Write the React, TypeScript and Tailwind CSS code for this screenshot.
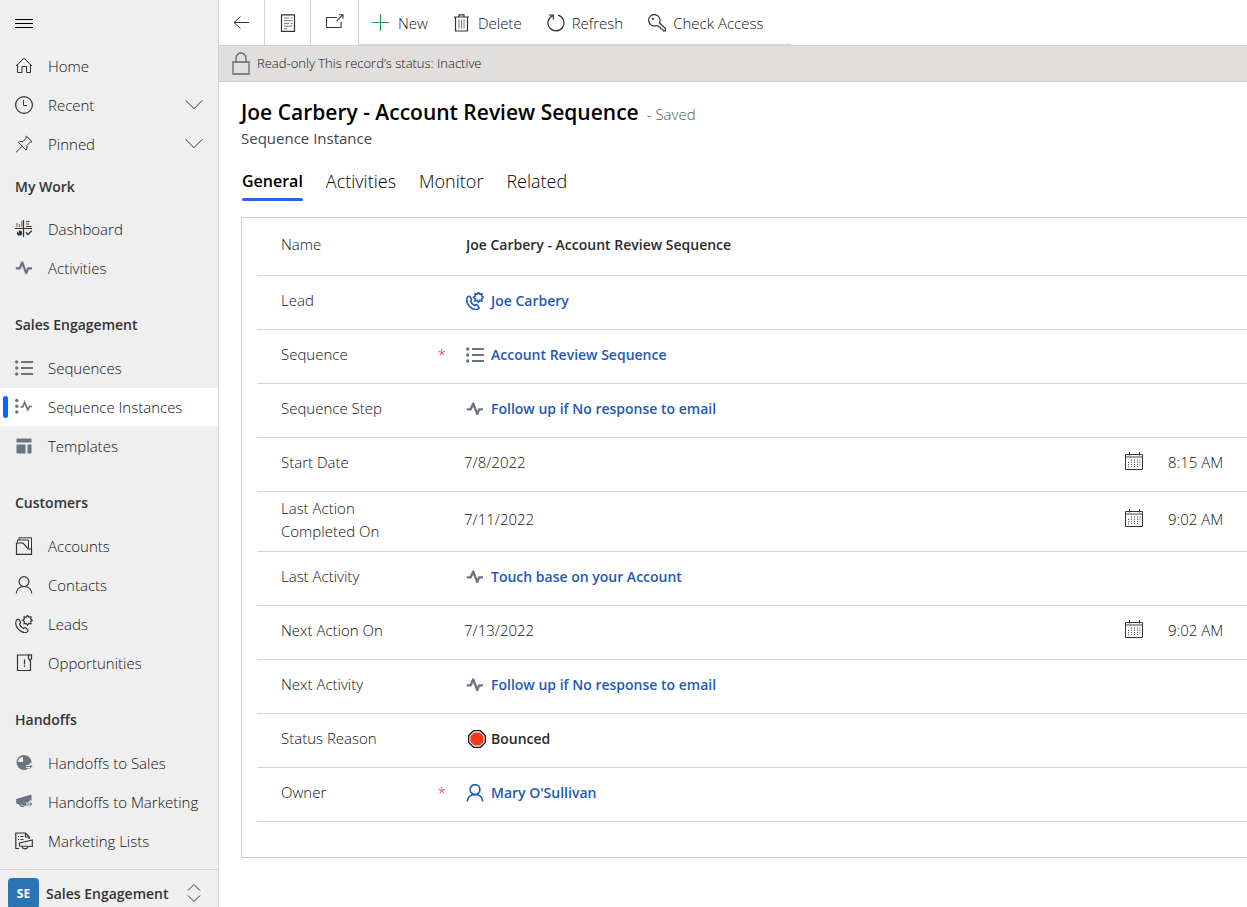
import type { ReactNode } from "react";
import clsx from "clsx";
import { twMerge } from "tailwind-merge";

type IconProps = { className?: string; children?: ReactNode };

function Icon({ className, children }: IconProps) {
  return (
    <svg
      viewBox="0 0 18 18"
      fill="none"
      stroke="currentColor"
      strokeWidth="1"
      aria-hidden="true"
      className={twMerge("size-[18px] shrink-0 text-[#333]", className)}
    >
      {children}
    </svg>
  );
}

const HomeIcon = () => (
  <Icon>
    <path d="M1 9 9 1.2 17 9M2.5 7.5v8h4.5v-6h4.5v6h4v-8" />
  </Icon>
);

const ClockIcon = () => (
  <Icon>
    <circle cx="9" cy="9" r="8.4" strokeWidth="1.2" />
    <path d="M8.5 4v5.5H12" />
  </Icon>
);

const PinIcon = () => (
  <Icon>
    <path d="M11.3 1 17 6.7l-1.9.5-3.3 3.3c.5 1.7.2 3.2-.7 4.5L3.5 7.4c1.3-1 2.8-1.2 4.5-.7L11 3.2zM7.2 11.2 1 17.3" />
  </Icon>
);

const DashboardIcon = () => (
  <Icon>
    <path d="M8.5 0v17M0 8.500h17" strokeWidth="1.2" />
    <path d="M2 7V3M4.500 7V4M6.800 7V1" stroke="#b0703a" strokeWidth="1.3" />
    <path d="M11 1.500h3.500M11 4h3M11 6.500h5.500" />
    <circle cx="4.500" cy="13" r="2.600" fill="currentColor" stroke="none" />
    <path d="M4 13.200V9.500H1z" fill="#efefef" stroke="none" />
    <path d="m10.800 12.300 2.200 2.200 3.800-3.700" strokeWidth="1.3" />
  </Icon>
);

const PulseIcon = () => (
  <Icon className="text-[#6b7480]">
    <path d="M.8 9.300h3.900L7.200 3.500l4 10.500 2-4.700H17" strokeWidth="2.300" strokeLinejoin="round" />
  </Icon>
);

const ListIcon = () => (
  <Icon className="text-[#6b7480]">
    <path d="M6 3h12M6 9h12M6 15h12" strokeWidth="2" />
    <g fill="currentColor" stroke="none">
      <circle cx="1.700" cy="3" r="1.700" />
      <circle cx="1.700" cy="9" r="1.700" />
      <circle cx="1.700" cy="15" r="1.700" />
    </g>
  </Icon>
);

const InstanceIcon = () => (
  <Icon className="text-[#6b7480]">
    <g fill="currentColor" stroke="none">
      <circle cx="1.800" cy="2.500" r="1.700" />
      <circle cx="1.800" cy="8.300" r="1.700" />
      <circle cx="1.800" cy="14" r="1.700" />
    </g>
    <path d="M5.500 8.800h2.300l1.800-4.500 3.200 7.500 1.700-3.300H17" strokeWidth="1.700" />
  </Icon>
);

const TemplateIcon = () => (
  <Icon className="text-[#6b7480]">
    <path
      d="M2.500 1.500h13a1 1 0 0 1 1 1v3h-15v-3a1 1 0 0 1 1-1zM1.500 7.500h9v9h-8a1 1 0 0 1-1-1zM12.500 7.500h4v8a1 1 0 0 1-1 1h-3z"
      fill="currentColor"
      stroke="none"
    />
  </Icon>
);

const AccountIcon = () => (
  <Icon>
    <path d="M1.500 6v11.400h15V12h-3.200L8 6z" strokeWidth="1.2" />
    <path d="M2.500 5.500V3h11v8.500M4 3V.8h12.500V12" />
  </Icon>
);

const PersonIcon = ({ className }: IconProps) => (
  <Icon className={className}>
    <circle cx="9" cy="5.600" r="4.900" strokeWidth="1.200" />
    <path d="M1.300 17.500c.4-4.400 3.500-7 7.700-7s7.300 2.600 7.700 7" strokeWidth="1.200" />
  </Icon>
);

const LeadIcon = ({ className }: IconProps) => (
  <Icon className={className}>
    <path
      d="M1.300 5.600C.2 8.500.8 11.500 3.300 14.200c2.600 2.800 5.800 3.900 8.400 3 .9-.4 1.600-1 1.300-1.800l-2.200-2.500c-.7-.5-1.500-.2-2.300.6C6.600 12.600 5.200 11 4.500 9c.9-.6 1.300-1.300 1-2L4 4.600C3 3.900 1.800 4.300 1.300 5.600z"
      strokeWidth="1.200"
    />
    <path
      d="m12.500.4 1.300 1.760 2.160-.32-.32 2.160 1.760 1.300-1.760 1.300.32 2.160-2.160-.32-1.300 1.760-1.300-1.760-2.160.32.32-2.160-1.760-1.300 1.760-1.300-.32-2.160 2.160.32z"
      strokeWidth="1.200"
    />
  </Icon>
);

const OpportunityIcon = () => (
  <Icon>
    <path d="M13.500 1h-11v15.500h13V6.500" strokeWidth="1.200" />
    <path d="M13.500.8h3v3.700l-1.500 2-1.500-2zM9.500 5.500v5M9.500 11.500v1.500" strokeWidth="1.200" />
  </Icon>
);

const SalesHandoffIcon = () => (
  <Icon className="text-[#6b7480]">
    <circle cx="9" cy="8.500" r="7.500" fill="currentColor" stroke="none" />
    <path d="M8 3v5H3a5.500 5.500 0 0 1 5-5z" fill="#efefef" stroke="none" />
    <path d="M11 12.500h7M14.500 9.500l3 3-3 3" stroke="#efefef" strokeWidth="3" />
    <path d="M11 12.500h5.800M14.500 10.200l2.300 2.300-2.300 2.300" />
  </Icon>
);

const MarketingHandoffIcon = () => (
  <Icon className="text-[#6b7480]">
    <path d="M1.200 6 15.500 1.800q1-.2 1 .8V13h-5L1.200 10.500z" fill="currentColor" stroke="none" />
    <path d="M4.500 11c.4 2.500 3.700 3.300 5 1.300" strokeWidth="1.500" />
    <path d="M11 11h7M14.500 8l3 3-3 3" stroke="#efefef" strokeWidth="3" />
    <path d="M10.800 11h6M14.500 8.700l2.300 2.300-2.300 2.300" />
  </Icon>
);

const MarketingListIcon = () => (
  <Icon>
    <path d="M4 16.500H.8V1h9.700L14 4.500V7M10.500 1v4H14" strokeWidth="1.200" />
    <path d="M3 4.500h1M5.500 4.500h3M3 7.500h1M5.500 7.500h3" strokeWidth="1.200" />
    <path d="M4.500 11 17.300 8v6.500L4.500 14zM7 14.500c.4 2.800 5 3.300 6 .3" strokeWidth="1.200" />
  </Icon>
);

const CalendarIcon = () => (
  <Icon>
    <path d="M.5 2.500h17v15H.5zM4.500 0v3.500M14.500 0v3.500" />
    <path d="M1 5h16" stroke="#8a8a8a" strokeWidth="1.600" />
    <path d="M6.500 7.500v8M9.500 7.500v8M12.500 7.500v8M15 7.500v5M3.500 10v5.500" strokeDasharray="1 1.200" />
  </Icon>
);

const StopIcon = () => (
  <Icon className="mx-0.5">
    <path d="M5.600.7h6.800l4.900 4.900v6.800l-4.900 4.900H5.600L.7 12.400V5.600z" fill="#fff" stroke="#111" strokeWidth="1.300" />
    <path d="M6.200 2.400h5.600l3.800 3.800v5.600l-3.800 3.800H6.200l-3.800-3.800V6.200z" fill="#f03a17" stroke="none" />
  </Icon>
);

const Chevron = () => (
  <Icon className="ml-auto">
    <path d="m.6 4.300 8.400 8.400 8.400-8.400" />
  </Icon>
);

type NavItem = { label: string; icon: ReactNode; expandable?: boolean; active?: boolean };

const topItems: NavItem[] = [
  { label: "Home", icon: <HomeIcon /> },
  { label: "Recent", icon: <ClockIcon />, expandable: true },
  { label: "Pinned", icon: <PinIcon />, expandable: true },
];

const groups: { title: string; items: NavItem[] }[] = [
  {
    title: "My Work",
    items: [
      { label: "Dashboard", icon: <DashboardIcon /> },
      { label: "Activities", icon: <PulseIcon /> },
    ],
  },
  {
    title: "Sales Engagement",
    items: [
      { label: "Sequences", icon: <ListIcon /> },
      { label: "Sequence Instances", icon: <InstanceIcon />, active: true },
      { label: "Templates", icon: <TemplateIcon /> },
    ],
  },
  {
    title: "Customers",
    items: [
      { label: "Accounts", icon: <AccountIcon /> },
      { label: "Contacts", icon: <PersonIcon /> },
      { label: "Leads", icon: <LeadIcon /> },
      { label: "Opportunities", icon: <OpportunityIcon /> },
    ],
  },
  {
    title: "Handoffs",
    items: [
      { label: "Handoffs to Sales", icon: <SalesHandoffIcon /> },
      { label: "Handoffs to Marketing", icon: <MarketingHandoffIcon /> },
      { label: "Marketing Lists", icon: <MarketingListIcon /> },
    ],
  },
];

function NavList({ items }: { items: NavItem[] }) {
  return (
    <ul className="flex flex-col gap-px">
      {items.map(({ label, icon, expandable, active }) => {
        const row = clsx(
          "relative flex h-[38px] w-full items-center gap-[15px] px-[15px] text-left whitespace-nowrap",
          active && "bg-white"
        );
        return (
          <li key={label}>
            {expandable ? (
              <button type="button" className={row} aria-expanded="false">
                {icon}
                {label}
                <Chevron />
              </button>
            ) : (
              <a href="#" className={row} aria-current={active ? "page" : undefined}>
                {active && <span className="absolute inset-y-2 left-[3px] w-[5px] rounded-full bg-[#0a66ff]" />}
                {icon}
                {label}
              </a>
            )}
          </li>
        );
      })}
    </ul>
  );
}

function Sidebar() {
  return (
    <aside className="flex w-[219px] shrink-0 flex-col border-r border-[#d4d4d4] bg-[#efefef]">
      <button type="button" aria-label="Site map" className="flex h-[47px] shrink-0 items-center pl-[15px]">
        <Icon className="text-black">
          <path d="M0 4.500h18M0 8.500h18M0 12.500h18" />
        </Icon>
      </button>
      <nav className="flex-1">
        <NavList items={topItems} />
        {groups.map((group, i) => (
          <section key={group.title}>
            <h2
              className={clsx(
                "flex items-center pl-[15px] text-sm font-semibold text-[#333]",
                i === 0 ? "h-[47px]" : "h-[62px] pt-3.5"
              )}
            >
              {group.title}
            </h2>
            <NavList items={group.items} />
          </section>
        ))}
      </nav>
      <button
        type="button"
        className="flex h-[38px] shrink-0 items-start border-t border-[#d4d4d4] pt-2 pr-[15px] pl-2 text-sm font-semibold text-[#333]"
      >
        <span className="flex size-[31px] shrink-0 items-center justify-center rounded-sm bg-[#2a76b5] text-xs font-bold text-white">
          SE
        </span>
        <span className="ml-[7px] leading-[31px] whitespace-nowrap">Sales Engagement</span>
        <Icon className="mt-1.5 ml-auto">
          <path d="m3 6.500 6-6 6 6M3 11.500l6 6 6-6" />
        </Icon>
      </button>
    </aside>
  );
}

const commands = [
  {
    label: "New",
    icon: (
      <Icon className="text-[#1fa35c]">
        <path d="M8.500 0v17M0 8.500h17" strokeWidth="1.200" />
      </Icon>
    ),
  },
  {
    label: "Delete",
    icon: (
      <Icon>
        <path d="M1 3h15M6 3V.8h5V3M2.500 3v14h12V3" strokeWidth="1.200" />
        <path d="M6 5.500v9M8.500 5.500v9M11 5.500v9" stroke="#777" />
      </Icon>
    ),
  },
  {
    label: "Refresh",
    icon: (
      <Icon>
        <path d="M11 1.200a8 8 0 1 1-5.500.5M1.800 1h4.500v4.500" strokeWidth="1.200" />
      </Icon>
    ),
  },
  {
    label: "Check Access",
    icon: (
      <Icon>
        <path
          d="M11.400 8.800A5.700 5.700 0 1 0 8.500 11.500l1.200.2 1.100 1.300 1.500.2.300 1.600 1.600.2 1.300 1.800H17.400V14.600z"
          strokeWidth="1.200"
        />
        <circle cx="4.800" cy="4.800" r="1.100" fill="currentColor" stroke="none" />
      </Icon>
    ),
  },
];

function CommandBar() {
  const square = "flex h-[45px] items-center justify-center border-r border-[#d4d4d4]";
  return (
    <div className="flex h-[45px] shrink-0">
      <button type="button" aria-label="Go back" className={clsx(square, "w-[46px]")}>
        <Icon>
          <path d="M16 8.500H1M7.500 2.500 1 8.500l6.500 6" />
        </Icon>
      </button>
      <button type="button" aria-label="Show list" className={clsx(square, "w-[46px]")}>
        <Icon>
          <path d="M2.500.8h13v16.600h-13z" strokeWidth="1.200" />
          <path d="M5 4h5M11.500 4h2M5 6.700h8.500M5 9.400h5M11.500 9.400h2M5 12.100h8.500M5 14.800h3" stroke="#777" />
        </Icon>
      </button>
      <button type="button" aria-label="Open in new window" className={clsx(square, "w-12")}>
        <Icon>
          <path d="M11 3.500H.5v10h14.500V8M10.500 7.200 16.500 1.200M13 .8h4v4" strokeWidth="1.100" />
        </Icon>
      </button>
      <div className="flex border-b border-[#d4d4d4] pr-4">
        {commands.map(({ label, icon }) => (
          <button
            key={label}
            type="button"
            className="flex items-center gap-[7px] pt-0.5 pr-3 pl-[13px] whitespace-nowrap first:gap-2"
          >
            {icon}
            {label}
          </button>
        ))}
      </div>
    </div>
  );
}

type Field = {
  label: string;
  text?: string;
  link?: string;
  icon?: ReactNode;
  date?: string;
  time?: string;
  required?: boolean;
};

const linkIcon = "text-[#1f5ab4] [&_*]:stroke-[1.6px]";

const fields: Field[] = [
  { label: "Name", text: "Joe Carbery - Account Review Sequence" },
  { label: "Lead", link: "Joe Carbery", icon: <LeadIcon className={linkIcon} /> },
  { label: "Sequence", link: "Account Review Sequence", icon: <ListIcon />, required: true },
  { label: "Sequence Step", link: "Follow up if No response to email", icon: <PulseIcon /> },
  { label: "Start Date", date: "7/8/2022", time: "8:15 AM" },
  { label: "Last Action Completed On", date: "7/11/2022", time: "9:02 AM" },
  { label: "Last Activity", link: "Touch base on your Account", icon: <PulseIcon /> },
  { label: "Next Action On", date: "7/13/2022", time: "9:02 AM" },
  { label: "Next Activity", link: "Follow up if No response to email", icon: <PulseIcon /> },
  { label: "Status Reason", text: "Bounced", icon: <StopIcon /> },
  { label: "Owner", link: "Mary O'Sullivan", icon: <PersonIcon className={linkIcon} />, required: true },
];

function FieldValue({ field, id }: { field: Field; id: string }) {
  if (field.date) {
    return (
      <>
        <input id={id} readOnly defaultValue={field.date} className="min-w-0 flex-1 outline-none" />
        <button type="button" aria-label={`Pick ${field.label}`} className="mr-[25px] mb-1">
          <CalendarIcon />
        </button>
        <input
          readOnly
          aria-label={`${field.label} time`}
          defaultValue={field.time}
          className="w-[79px] outline-none"
        />
      </>
    );
  }
  if (field.link) {
    return (
      <div className="flex items-center gap-[7px] pl-0.5 text-sm font-semibold text-[#1f5ab4]">
        {field.icon}
        <a id={id} href="#">
          {field.link}
        </a>
      </div>
    );
  }
  return (
    <div className="flex flex-1 items-center gap-[3px] pl-0.5">
      {field.icon}
      <input
        id={id}
        readOnly
        defaultValue={field.text}
        className="min-w-0 flex-1 text-sm font-semibold text-[#2b2b2b] outline-none"
      />
    </div>
  );
}

function RecordForm() {
  return (
    <form className="ml-[22px] border-y border-l border-[#cfcfcf] pb-[35px] pl-[15px]">
      {fields.map((field, i) => {
        const id = `field-${i}`;
        return (
          <div
            key={field.label}
            className={clsx(
              "flex items-center border-b border-[#d4d4d4] pb-1 pl-6",
              i === 0 ? "h-[58px]" : field.label.length > 20 ? "h-[60px]" : "h-[54px]"
            )}
          >
            <div className="flex w-[183px] shrink-0 items-center justify-between pr-[18px]">
              <label htmlFor={id} className="w-[120px] leading-[23px]">
                {field.label}
              </label>
              {field.required && <span className="text-[#e81123]">*</span>}
            </div>
            <FieldValue field={field} id={id} />
          </div>
        );
      })}
    </form>
  );
}

const tabs = ["General", "Activities", "Monitor", "Related"];

export default function App() {
  return (
    <div className="flex h-screen overflow-hidden bg-white font-['Open_Sans','Noto_Sans',sans-serif] text-[15px] font-light text-[#111]">
      <Sidebar />
      <main className="flex min-w-0 flex-1 flex-col">
        <CommandBar />
        <div className="flex h-[37px] shrink-0 items-center gap-[7px] border-y border-[#d2d2d2] bg-[#e0dfdd] pl-[13px] text-[13px]">
          <svg
            viewBox="0 0 18 23"
            fill="none"
            stroke="#666"
            strokeWidth="1.300"
            aria-hidden="true"
            className="h-[23px] w-[18px] shrink-0"
          >
            <path d="M1 10h16v12H1zM4 10V6a5 5 0 0 1 10 0v4" />
          </svg>
          Read-only This record’s status: Inactive
        </div>
        <header className="px-[22px] pt-4">
          <div className="flex items-baseline gap-2 leading-7">
            <h1 className="text-[21px] font-semibold text-black">Joe Carbery - Account Review Sequence</h1>
            <span className="text-[#555]">- Saved</span>
          </div>
          <p className="leading-5 font-normal text-[#444]">Sequence Instance</p>
        </header>
        <div role="tablist" className="mt-[19px] mb-4 flex gap-[23px] px-[23px] text-lg leading-6 text-black">
          {tabs.map((tab, i) => (
            <button
              key={tab}
              type="button"
              role="tab"
              aria-selected={i === 0}
              className={clsx("relative h-[34px] pb-1.5", i === 0 && "text-base font-semibold")}
            >
              {tab}
              {i === 0 && <span className="absolute inset-x-0 bottom-0 h-[3px] rounded-full bg-[#2266e3]" />}
            </button>
          ))}
        </div>
        <RecordForm />
      </main>
    </div>
  );
}
